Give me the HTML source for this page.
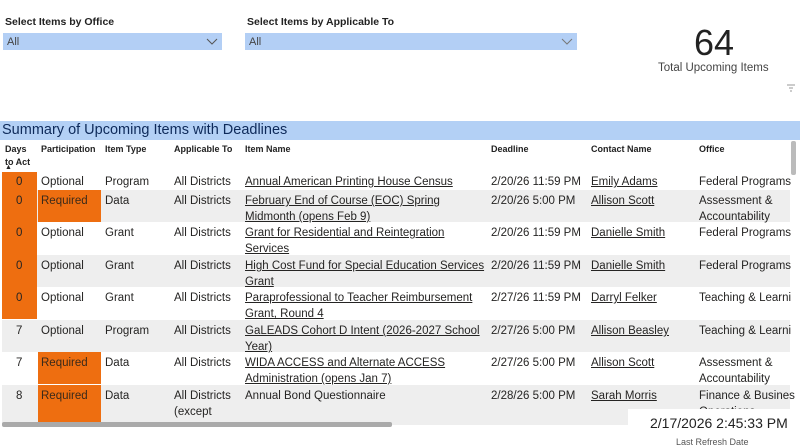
<!DOCTYPE html>
<html><head><meta charset="utf-8"><style>
*{margin:0;padding:0;box-sizing:border-box}
body{width:800px;height:448px;background:#fff;position:relative;overflow:hidden;font-family:"Liberation Sans",sans-serif;color:#252423}
.a{position:absolute;white-space:nowrap}
.lbl{font-size:10.5px;font-weight:bold;color:#222}
.dd{position:absolute;background:#b3cff5;height:17px;font-size:11px;color:#444;padding:3px 0 0 4px}
.row{position:absolute;left:2px;width:788px}
.c{position:absolute;top:3px;font-size:11.5px;line-height:16px;white-space:nowrap;color:#252423}
.u{text-decoration:underline}
.hd{position:absolute;top:143px;font-size:9px;font-weight:bold;line-height:13px;color:#222}
.or{position:absolute;background:#ee6e10}
</style></head><body>
<div class="a lbl" style="left:5px;top:16px">Select Items by Office</div>
<div class="dd" style="left:3px;top:33px;width:219px">All<svg style="position:absolute;right:4px;top:5px" width="12" height="8"><path d="M1 1L6 6L11 1" stroke="#555" fill="none"/></svg></div>
<div class="a lbl" style="left:247px;top:16px">Select Items by Applicable To</div>
<div class="dd" style="left:245px;top:33px;width:332px">All<svg style="position:absolute;right:4px;top:5px" width="12" height="8"><path d="M1 1L6 6L11 1" stroke="#777" fill="none"/></svg></div>
<div class="a" style="left:694px;top:22px;font-size:36px;color:#222">64</div>
<div class="a" style="left:658px;top:62px;font-size:11.5px;color:#444">Total Upcoming Items</div>
<svg class="a" style="left:787px;top:84px" width="8" height="8"><path d="M0 1H8M2 4H6M3 7H5" stroke="#999"/></svg>
<div class="a" style="left:0;top:121px;width:800px;height:19px;background:#b3d0f5;font-size:14.5px;color:#0e2a5a;padding:1px 0 0 2px">Summary of Upcoming Items with Deadlines</div>
<div class="hd" style="left:5px">Days<br>to Act</div>
<div class="a" style="left:5px;top:164px;font-size:7px">▲</div>
<div class="hd" style="left:41px">Participation</div>
<div class="hd" style="left:105px">Item Type</div>
<div class="hd" style="left:174px">Applicable To</div>
<div class="hd" style="left:245px">Item Name</div>
<div class="hd" style="left:491px">Deadline</div>
<div class="hd" style="left:591px">Contact Name</div>
<div class="hd" style="left:699px">Office</div>
<div class="a" style="left:791px;top:141px;width:5px;height:34px;background:#bbb;border-radius:2px"></div>

<!-- rows -->
<div class="row" style="top:172px;height:18px;background:#fff"></div>
<div class="row" style="top:190px;height:32px;background:#eee"></div>
<div class="row" style="top:222px;height:32px;background:#fff"></div>
<div class="row" style="top:255px;height:32px;background:#eee"></div>
<div class="row" style="top:287px;height:32px;background:#fff"></div>
<div class="row" style="top:320px;height:32px;background:#eee"></div>
<div class="row" style="top:352px;height:32px;background:#fff"></div>
<div class="row" style="top:385px;height:40px;background:#eee"></div>
<div class="or" style="left:2px;top:172px;width:35px;height:147px"></div>
<div class="or" style="left:38px;top:190px;width:63px;height:32px"></div>
<div class="or" style="left:38px;top:352px;width:63px;height:32px"></div>
<div class="or" style="left:38px;top:385px;width:63px;height:40px"></div>

<div style="position:absolute;left:0;top:172px">
<div class="c" style="left:16px;top:2px">0</div><div class="c" style="left:41px;top:2px">Optional</div><div class="c" style="left:105px;top:2px">Program</div><div class="c" style="left:174px;top:2px">All Districts</div><div class="c u" style="left:245px;top:2px">Annual American Printing House Census</div><div class="c" style="left:491px;top:2px">2/20/26 11:59 PM</div><div class="c u" style="left:591px;top:2px">Emily Adams</div><div class="c" style="left:699px;top:2px">Federal Programs</div>
</div>
<div style="position:absolute;left:0;top:190px">
<div class="c" style="left:16px">0</div><div class="c" style="left:41px;color:#3a2a1a">Required</div><div class="c" style="left:105px">Data</div><div class="c" style="left:174px">All Districts</div><div class="c u" style="left:245px">February End of Course (EOC) Spring<br>Midmonth (opens Feb 9)</div><div class="c" style="left:491px">2/20/26 5:00 PM</div><div class="c u" style="left:591px">Allison Scott</div><div class="c" style="left:699px">Assessment &amp;<br>Accountability</div>
</div>
<div style="position:absolute;left:0;top:222px">
<div class="c" style="left:16px">0</div><div class="c" style="left:41px">Optional</div><div class="c" style="left:105px">Grant</div><div class="c" style="left:174px">All Districts</div><div class="c u" style="left:245px">Grant for Residential and Reintegration<br>Services</div><div class="c" style="left:491px">2/20/26 11:59 PM</div><div class="c u" style="left:591px">Danielle Smith</div><div class="c" style="left:699px">Federal Programs</div>
</div>
<div style="position:absolute;left:0;top:255px">
<div class="c" style="left:16px">0</div><div class="c" style="left:41px">Optional</div><div class="c" style="left:105px">Grant</div><div class="c" style="left:174px">All Districts</div><div class="c u" style="left:245px">High Cost Fund for Special Education Services<br>Grant</div><div class="c" style="left:491px">2/20/26 11:59 PM</div><div class="c u" style="left:591px">Danielle Smith</div><div class="c" style="left:699px">Federal Programs</div>
</div>
<div style="position:absolute;left:0;top:287px">
<div class="c" style="left:16px">0</div><div class="c" style="left:41px">Optional</div><div class="c" style="left:105px">Grant</div><div class="c" style="left:174px">All Districts</div><div class="c u" style="left:245px">Paraprofessional to Teacher Reimbursement<br>Grant, Round 4</div><div class="c" style="left:491px">2/27/26 11:59 PM</div><div class="c u" style="left:591px">Darryl Felker</div><div class="c" style="left:699px">Teaching &amp; Learni</div>
</div>
<div style="position:absolute;left:0;top:320px">
<div class="c" style="left:16px">7</div><div class="c" style="left:41px">Optional</div><div class="c" style="left:105px">Program</div><div class="c" style="left:174px">All Districts</div><div class="c u" style="left:245px">GaLEADS Cohort D Intent (2026-2027 School<br>Year)</div><div class="c" style="left:491px">2/27/26 5:00 PM</div><div class="c u" style="left:591px">Allison Beasley</div><div class="c" style="left:699px">Teaching &amp; Learni</div>
</div>
<div style="position:absolute;left:0;top:352px">
<div class="c" style="left:16px">7</div><div class="c" style="left:41px;color:#3a2a1a">Required</div><div class="c" style="left:105px">Data</div><div class="c" style="left:174px">All Districts</div><div class="c u" style="left:245px">WIDA ACCESS and Alternate ACCESS<br>Administration (opens Jan 7)</div><div class="c" style="left:491px">2/27/26 5:00 PM</div><div class="c u" style="left:591px">Allison Scott</div><div class="c" style="left:699px">Assessment &amp;<br>Accountability</div>
</div>
<div style="position:absolute;left:0;top:385px;height:40px;width:800px;overflow:hidden">
<div class="c" style="left:16px">8</div><div class="c" style="left:41px;color:#3a2a1a">Required</div><div class="c" style="left:105px">Data</div><div class="c" style="left:174px">All Districts<br>(except</div><div class="c" style="left:245px">Annual Bond Questionnaire</div><div class="c" style="left:491px">2/28/26 5:00 PM</div><div class="c u" style="left:591px">Sarah Morris</div><div class="c" style="left:699px">Finance &amp; Busines<br>Operations</div>
</div>
<div class="a" style="left:2px;top:422px;width:390px;height:5px;background:#aaa;border-radius:2px"></div>
<div class="a" style="left:628px;top:409px;width:172px;height:39px;background:#fff"></div>
<div class="a" style="left:650px;top:415px;font-size:14px;color:#222">2/17/2026 2:45:33 PM</div>
<div class="a" style="left:676px;top:437px;font-size:9px;color:#555">Last Refresh Date</div>
</body></html>
